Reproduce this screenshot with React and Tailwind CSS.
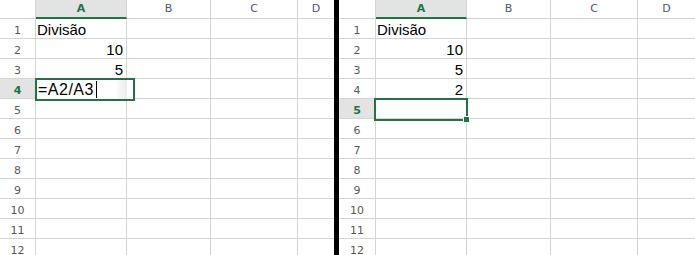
import React from "react";

const GRID = "border-[#d4d4d4]";

function Panel({ rowW, colW, activeRow, values, editing }) {
  const rows = Array.from({ length: 12 }, (_, i) => i + 1);
  const letters = ["A", "B", "C", "D"];
  return (
    <div className="relative h-full overflow-hidden bg-white">
      <div className="flex h-[19px]">
        <div className={`shrink-0 border-r border-b ${GRID} h-[19px]`} style={{ width: rowW }} />
        {letters.map((l, i) => {
          const sel = l === "A";
          const last = i === 3;
          return (
            <div
              key={l}
              className={`h-[19px] flex items-start justify-center ${last ? "flex-1" : "shrink-0 border-r"} ${GRID} ${
                sel ? "bg-[#e3e3e3] border-b-2 border-b-[#217346]" : "border-b"
              }`}
              style={last ? undefined : { width: colW[i] }}
            >
              <span
                className={`mt-[2px] text-[11px] leading-[13px] font-['DejaVu_Sans',sans-serif] ${
                  sel ? "font-bold text-[#217346]" : "text-[#4f5671]"
                }`}
              >
                {l}
              </span>
            </div>
          );
        })}
      </div>
      {rows.map((r) => {
        const sel = r === activeRow;
        const v = values[r];
        return (
          <div key={r} className="flex h-[20px]">
            <div
              className={`shrink-0 h-[20px] border-r border-b ${GRID} flex items-end justify-center ${
                sel ? "bg-[#e3e3e3]" : ""
              }`}
              style={{ width: rowW }}
            >
              <span
                className={`mb-[1px] text-[11px] leading-[13px] font-['DejaVu_Sans',sans-serif] ${
                  sel ? "font-bold text-[#217346]" : "text-[#595959]"
                }`}
              >
                {r}
              </span>
            </div>
            {[0, 1, 2, 3].map((c) => {
              const last = c === 3;
              const content = c === 0 ? v : null;
              return (
                <div
                  key={c}
                  className={`h-[20px] border-b ${GRID} ${last ? "flex-1" : "shrink-0 border-r"} flex items-end ${
                    content && content.align === "right" ? "justify-end pr-[3px]" : "justify-start pl-[1px]"
                  }`}
                  style={last ? undefined : { width: colW[c] }}
                >
                  {content && (
                    <span className="text-[15px] leading-[17px] text-black font-['Liberation_Sans',Arial,sans-serif]">
                      {content.text}
                    </span>
                  )}
                </div>
              );
            })}
          </div>
        );
      })}
      {editing}
    </div>
  );
}

export default function App() {
  const leftValues = {
    1: { text: "Divisão", align: "left" },
    2: { text: "10", align: "right" },
    3: { text: "5", align: "right" },
  };
  const rightValues = {
    1: { text: "Divisão", align: "left" },
    2: { text: "10", align: "right" },
    3: { text: "5", align: "right" },
    4: { text: "2", align: "right" },
  };
  const leftEdit = (
    <div className="absolute left-[35px] top-[78px] w-[100px] h-[23px] border-2 border-[#217346] bg-white flex items-center">
      <div className="absolute right-[6px] top-0 h-full w-[10px] bg-gradient-to-r from-[#fafafa] to-[#ececec]" />
      <span className="relative ml-[1px] text-[16px] leading-[18px] tracking-[0.5px] text-black font-['Liberation_Sans',Arial,sans-serif]">
        =A2/A3
      </span>
      <span className="relative ml-[2px] w-[1px] h-[17px] bg-black" />
    </div>
  );
  const rightSel = (
    <div className="absolute left-[35px] top-[98px] w-[94px] h-[23px] border-2 border-[#217346]">
      <div className="absolute right-[-4px] bottom-[-4px] w-[5px] h-[5px] bg-[#217346] border border-white box-content" />
    </div>
  );
  return (
    <div className="flex w-[695px] h-[255px] overflow-hidden bg-white">
      <div className="w-[334px] shrink-0 h-full">
        <Panel rowW={36} colW={[91, 84, 87]} activeRow={4} values={leftValues} editing={leftEdit} />
      </div>
      <div className="w-[5px] shrink-0 h-full bg-black" />
      <div className="flex-1 h-full">
        <Panel rowW={37} colW={[91, 84, 87]} activeRow={5} values={rightValues} editing={rightSel} />
      </div>
    </div>
  );
}
